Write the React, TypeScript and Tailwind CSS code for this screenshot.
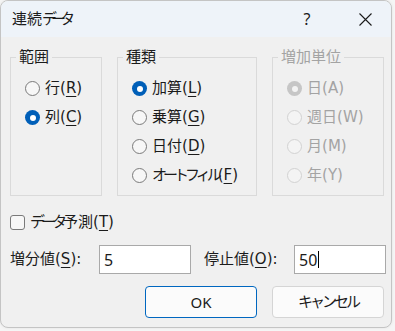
import React from "react";

const FONT = "font-['DejaVu_Sans','Noto_Sans_CJK_JP',sans-serif]";

function K({ children, t = "tracking-[-4px]" }: { children: React.ReactNode; t?: string }) {
  return <span className={t}>{children}</span>;
}

function U({ children }: { children: React.ReactNode }) {
  return <span className="underline underline-offset-[3px] decoration-[1px]">{children}</span>;
}

function Radio({ checked, disabled }: { checked?: boolean; disabled?: boolean }) {
  if (checked && !disabled)
    return (
      <span className="w-[15px] h-[15px] rounded-full bg-[#005fb8] flex items-center justify-center shrink-0">
        <span className="w-[6px] h-[6px] rounded-full bg-white" />
      </span>
    );
  if (checked && disabled)
    return (
      <span className="w-[15px] h-[15px] rounded-full bg-[#c6c6c6] flex items-center justify-center shrink-0">
        <span className="w-[6px] h-[6px] rounded-full bg-[#f3f3f3]" />
      </span>
    );
  if (disabled)
    return <span className="w-[15px] h-[15px] rounded-full border border-[#d2d2d2] bg-[#f4f4f4] shrink-0" />;
  return <span className="w-[15px] h-[15px] rounded-full border border-[#7a7a7a] bg-[#f7f7f7] shrink-0" />;
}

function Item({
  label,
  mn,
  checked,
  disabled,
}: {
  label: React.ReactNode;
  mn: string;
  checked?: boolean;
  disabled?: boolean;
}) {
  return (
    <div className="h-[29px] flex items-center gap-[5px]">
      <Radio checked={checked} disabled={disabled} />
      <span className={"whitespace-nowrap " + (disabled ? "text-[#a3a3a3]" : "text-[#1b1b1b]")}>
        {label}({disabled ? mn : <U>{mn}</U>})
      </span>
    </div>
  );
}

function Group({
  title,
  disabled,
  className,
  children,
}: {
  title: string;
  disabled?: boolean;
  className: string;
  children: React.ReactNode;
}) {
  return (
    <div className={"relative border border-[#dadada] h-[139px] pt-[16px] pl-[14px] shrink-0 " + className}>
      <span
        className={
          "absolute -top-[11px] left-[5px] px-[3px] bg-[#f0f0f0] leading-[20px] " +
          (disabled ? "text-[#a3a3a3]" : "text-[#1b1b1b]")
        }
      >
        {title}
      </span>
      {children}
    </div>
  );
}

export default function App() {
  return (
    <div className={"w-[395px] h-[331px] bg-[#f5f5f5] text-[15px] " + FONT}>
      <div className="w-[392px] h-[328px] rounded-[8px] border border-[#c4c4c4] bg-[#f0f0f0] overflow-hidden flex flex-col shadow-[0_0_3px_rgba(0,0,0,0.08)]">
        <div className="h-[36px] bg-[#eef3f9] flex items-center pl-[11px] shrink-0">
          <span className="text-[15px] text-[#1b1b1b] flex-1">
            連続<K t="tracking-[-6px]">データ</K>
          </span>
          <span className="w-[46px] text-center text-[16px] text-[#1b1b1b] mr-[12px] font-['Noto_Sans',sans-serif]">?</span>
          <span className="w-[46px] flex justify-center mr-[3px]">
            <svg width="13" height="13" viewBox="0 0 13 13">
              <path d="M0.5 0.5 L12.5 12.5 M12.5 0.5 L0.5 12.5" stroke="#1b1b1b" strokeWidth="1.1" />
            </svg>
          </span>
        </div>
        <div className="flex flex-col px-[9px]">
          <div className="flex gap-[15px] mt-[20px]">
            <Group title="範囲" className="w-[92px]">
              <Item label="行" mn="R" />
              <Item label="列" mn="C" checked />
            </Group>
            <Group title="種類" className="w-[140px]">
              <Item label="加算" mn="L" checked />
              <Item label="乗算" mn="G" />
              <Item label="日付" mn="D" />
              <Item label={<K>オートフィル</K>} mn="F" />
            </Group>
            <Group title="増加単位" disabled className="w-[112px]">
              <Item label="日" mn="A" checked disabled />
              <Item label="週日" mn="W" disabled />
              <Item label="月" mn="M" disabled />
              <Item label="年" mn="Y" disabled />
            </Group>
          </div>
          <div className="h-[20px] mt-[16px] flex items-center gap-[5px] text-[#1b1b1b]">
            <span className="w-[15px] h-[15px] rounded-[3px] border border-[#7a7a7a] bg-[#f7f7f7]" />
            <span>
              <K>データ</K>予測(<U>T</U>)
            </span>
          </div>
          <div className="flex items-center mt-[13px] text-[#1b1b1b]">
            <span className="w-[89px] shrink-0 whitespace-nowrap">
              増分値(<U>S</U>):
            </span>
            <div className="w-[92px] h-[29px] shrink-0 bg-white border border-[#a9a9a9] flex items-center pl-[4px] text-[16px] font-['Noto_Sans',sans-serif]">
              5
            </div>
            <span className="w-[103px] shrink-0 pl-[13px] whitespace-nowrap">
              停止値(<U>O</U>):
            </span>
            <div className="w-[92px] h-[29px] shrink-0 bg-white border border-[#a9a9a9] flex items-center pl-[4px] text-[16px] font-['Noto_Sans',sans-serif]">
              50
              <span className="w-[1px] h-[17px] bg-black ml-[1px]" />
            </div>
          </div>
          <div className="flex justify-end gap-[15px] mt-[12px] -mr-[2px]">
            <button className="w-[112px] h-[32px] rounded-[4px] border border-[#0067c0] bg-[#fbfbfb] text-[15px] text-[#1b1b1b] font-['Noto_Sans',sans-serif]">
              OK
            </button>
            <button className="w-[112px] h-[32px] rounded-[4px] border border-[#d5d5d5] bg-[#fbfbfb] text-[15px] text-[#1b1b1b]">
              <K t="tracking-[-3px]">キャンセル</K>
            </button>
          </div>
        </div>
      </div>
    </div>
  );
}
